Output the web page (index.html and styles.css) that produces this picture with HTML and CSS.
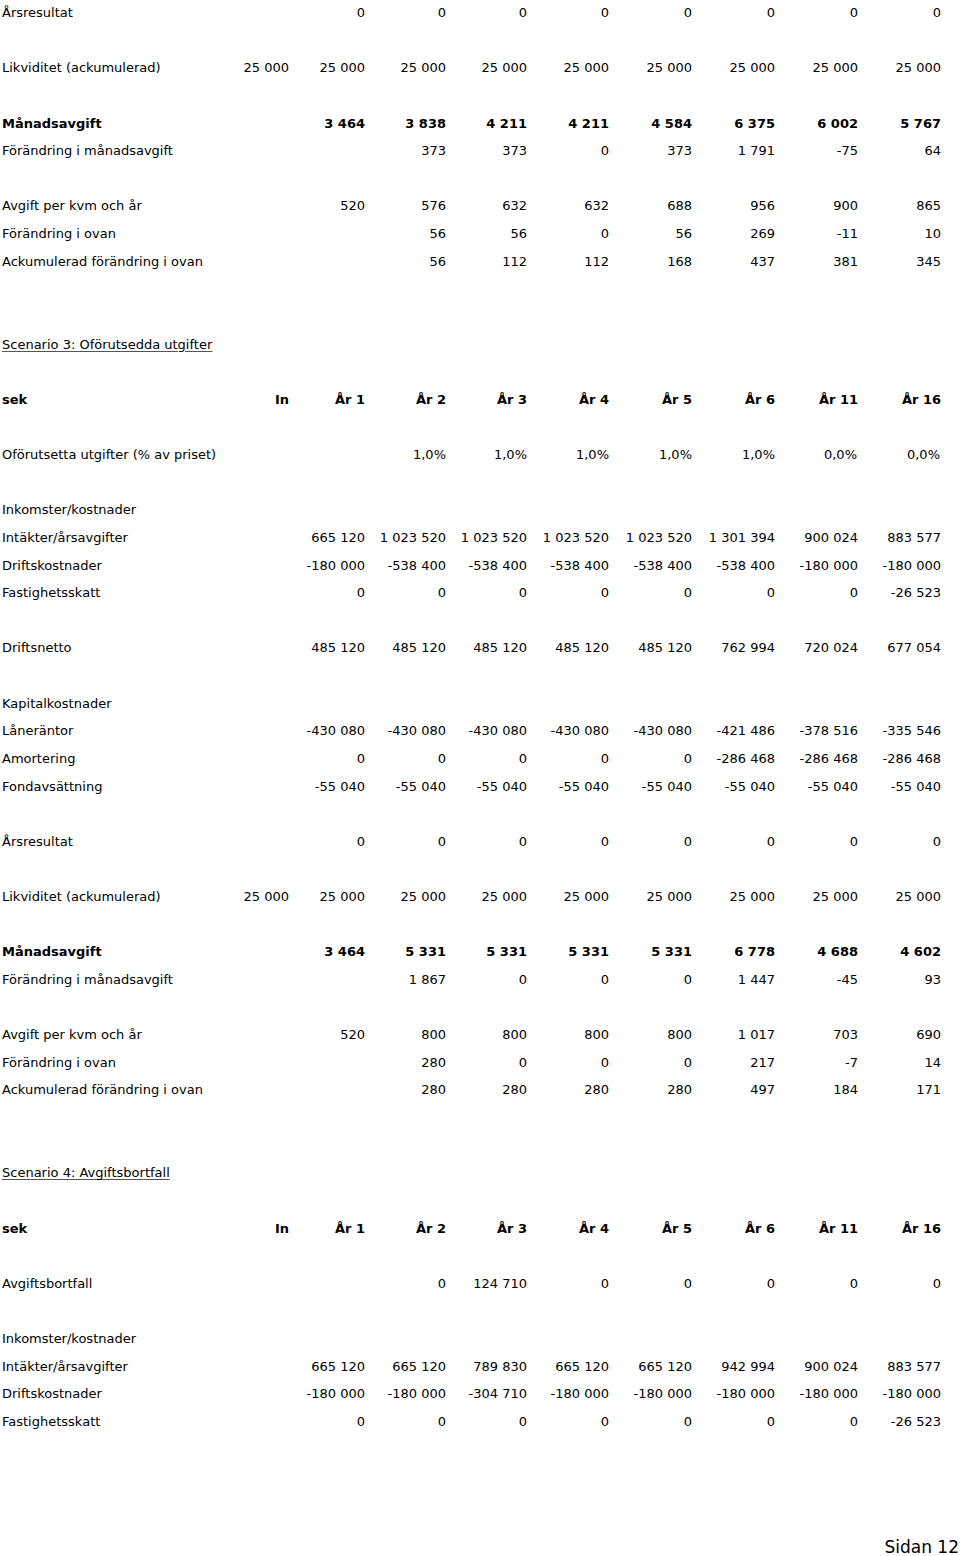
FILE: index.html
```html
<!DOCTYPE html>
<html lang="sv">
<head>
<meta charset="utf-8">
<title>Sidan 12</title>
<link rel="stylesheet" href="styles.css">
</head>
<body>
<div class="sheet">
  <div class="row"><span>Årsresultat</span><span></span><span>0</span><span>0</span><span>0</span><span>0</span><span>0</span><span>0</span><span>0</span><span>0</span></div>
  <div class="row gap1"><span>Likviditet (ackumulerad)</span><span>25 000</span><span>25 000</span><span>25 000</span><span>25 000</span><span>25 000</span><span>25 000</span><span>25 000</span><span>25 000</span><span>25 000</span></div>
  <div class="row gap1 bold"><span>Månadsavgift</span><span></span><span>3 464</span><span>3 838</span><span>4 211</span><span>4 211</span><span>4 584</span><span>6 375</span><span>6 002</span><span>5 767</span></div>
  <div class="row"><span>Förändring i månadsavgift</span><span></span><span></span><span>373</span><span>373</span><span>0</span><span>373</span><span>1 791</span><span>-75</span><span>64</span></div>
  <div class="row gap1"><span>Avgift per kvm och år</span><span></span><span>520</span><span>576</span><span>632</span><span>632</span><span>688</span><span>956</span><span>900</span><span>865</span></div>
  <div class="row"><span>Förändring i ovan</span><span></span><span></span><span>56</span><span>56</span><span>0</span><span>56</span><span>269</span><span>-11</span><span>10</span></div>
  <div class="row"><span>Ackumulerad förändring i ovan</span><span></span><span></span><span>56</span><span>112</span><span>112</span><span>168</span><span>437</span><span>381</span><span>345</span></div>

  <div class="row gap2"><span class="heading">Scenario 3: Oförutsedda utgifter</span></div>
  <div class="row gap1 bold"><span>sek</span><span>In</span><span>År 1</span><span>År 2</span><span>År 3</span><span>År 4</span><span>År 5</span><span>År 6</span><span>År 11</span><span>År 16</span></div>
  <div class="row gap1"><span>Oförutsetta utgifter (% av priset)</span><span></span><span></span><span>1,0%</span><span>1,0%</span><span>1,0%</span><span>1,0%</span><span>1,0%</span><span class="pct">0,0%</span><span class="pct">0,0%</span></div>
  <div class="row gap1"><span>Inkomster/kostnader</span></div>
  <div class="row"><span>Intäkter/årsavgifter</span><span></span><span>665 120</span><span>1 023 520</span><span>1 023 520</span><span>1 023 520</span><span>1 023 520</span><span>1 301 394</span><span>900 024</span><span>883 577</span></div>
  <div class="row"><span>Driftskostnader</span><span></span><span>-180 000</span><span>-538 400</span><span>-538 400</span><span>-538 400</span><span>-538 400</span><span>-538 400</span><span>-180 000</span><span>-180 000</span></div>
  <div class="row"><span>Fastighetsskatt</span><span></span><span>0</span><span>0</span><span>0</span><span>0</span><span>0</span><span>0</span><span>0</span><span>-26 523</span></div>
  <div class="row gap1"><span>Driftsnetto</span><span></span><span>485 120</span><span>485 120</span><span>485 120</span><span>485 120</span><span>485 120</span><span>762 994</span><span>720 024</span><span>677 054</span></div>
  <div class="row gap1"><span>Kapitalkostnader</span></div>
  <div class="row"><span>Låneräntor</span><span></span><span>-430 080</span><span>-430 080</span><span>-430 080</span><span>-430 080</span><span>-430 080</span><span>-421 486</span><span>-378 516</span><span>-335 546</span></div>
  <div class="row"><span>Amortering</span><span></span><span>0</span><span>0</span><span>0</span><span>0</span><span>0</span><span>-286 468</span><span>-286 468</span><span>-286 468</span></div>
  <div class="row"><span>Fondavsättning</span><span></span><span>-55 040</span><span>-55 040</span><span>-55 040</span><span>-55 040</span><span>-55 040</span><span>-55 040</span><span>-55 040</span><span>-55 040</span></div>
  <div class="row gap1"><span>Årsresultat</span><span></span><span>0</span><span>0</span><span>0</span><span>0</span><span>0</span><span>0</span><span>0</span><span>0</span></div>
  <div class="row gap1"><span>Likviditet (ackumulerad)</span><span>25 000</span><span>25 000</span><span>25 000</span><span>25 000</span><span>25 000</span><span>25 000</span><span>25 000</span><span>25 000</span><span>25 000</span></div>
  <div class="row gap1 bold"><span>Månadsavgift</span><span></span><span>3 464</span><span>5 331</span><span>5 331</span><span>5 331</span><span>5 331</span><span>6 778</span><span>4 688</span><span>4 602</span></div>
  <div class="row"><span>Förändring i månadsavgift</span><span></span><span></span><span>1 867</span><span>0</span><span>0</span><span>0</span><span>1 447</span><span>-45</span><span>93</span></div>
  <div class="row gap1"><span>Avgift per kvm och år</span><span></span><span>520</span><span>800</span><span>800</span><span>800</span><span>800</span><span>1 017</span><span>703</span><span>690</span></div>
  <div class="row"><span>Förändring i ovan</span><span></span><span></span><span>280</span><span>0</span><span>0</span><span>0</span><span>217</span><span>-7</span><span>14</span></div>
  <div class="row"><span>Ackumulerad förändring i ovan</span><span></span><span></span><span>280</span><span>280</span><span>280</span><span>280</span><span>497</span><span>184</span><span>171</span></div>

  <div class="row gap2"><span class="heading">Scenario 4: Avgiftsbortfall</span></div>
  <div class="row gap1 bold"><span>sek</span><span>In</span><span>År 1</span><span>År 2</span><span>År 3</span><span>År 4</span><span>År 5</span><span>År 6</span><span>År 11</span><span>År 16</span></div>
  <div class="row gap1"><span>Avgiftsbortfall</span><span></span><span></span><span>0</span><span>124 710</span><span>0</span><span>0</span><span>0</span><span>0</span><span>0</span></div>
  <div class="row gap1"><span>Inkomster/kostnader</span></div>
  <div class="row"><span>Intäkter/årsavgifter</span><span></span><span>665 120</span><span>665 120</span><span>789 830</span><span>665 120</span><span>665 120</span><span>942 994</span><span>900 024</span><span>883 577</span></div>
  <div class="row"><span>Driftskostnader</span><span></span><span>-180 000</span><span>-180 000</span><span>-304 710</span><span>-180 000</span><span>-180 000</span><span>-180 000</span><span>-180 000</span><span>-180 000</span></div>
  <div class="row"><span>Fastighetsskatt</span><span></span><span>0</span><span>0</span><span>0</span><span>0</span><span>0</span><span>0</span><span>0</span><span>-26 523</span></div>
</div>
<div class="footer">Sidan 12</div>
</body>
</html>
```

FILE: styles.css
```css
html, body {
  margin: 0;
  padding: 0;
  background: #ffffff;
}

body {
  width: 960px;
  height: 1556px;
  overflow: hidden;
  font-family: "DejaVu Sans", Verdana, sans-serif;
  font-size: 13px;
  color: #000000;
}

.sheet {
  margin-top: -1px;
  padding-left: 2px;
}

.row {
  display: grid;
  grid-template-columns: 211px 76px 76px 81px 81px 82px 83px 83px 83px 83px;
  height: 27.63px;
  line-height: 27.63px;
  white-space: nowrap;
}

.row span {
  text-align: right;
}

.row span:first-child {
  text-align: left;
}

.row .pct {
  padding-right: 1px;
}

.gap1 {
  margin-top: 27.63px;
}

.gap2 {
  margin-top: 55.26px;
}

.bold {
  font-weight: bold;
}

.heading {
  text-decoration: underline;
  text-decoration-color: #555555;
  text-underline-offset: 2px;
}

.footer {
  margin-top: 100px;
  padding-right: 1px;
  text-align: right;
  font-size: 17px;
  line-height: 22px;
}
```
